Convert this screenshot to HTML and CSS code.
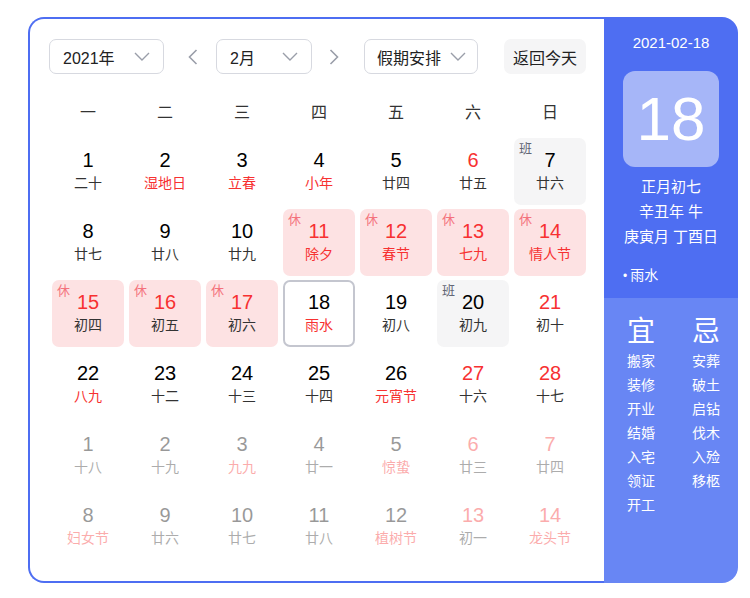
FILE: index.html
```html
<!DOCTYPE html>
<html lang="zh-CN">
<head>
<meta charset="utf-8">
<title>日历</title>
<link rel="stylesheet" href="styles.css">
</head>
<body>
<div class="cal">
  <div class="main">
    <div class="toolbar">
      <div class="select sel-year"><span>2021年</span><svg class="chev" width="16" height="9" viewBox="0 0 16 9"><path d="M1 1l7 7 7-7" fill="none" stroke="#9a9ea9" stroke-width="1.4"/></svg></div>
      <div class="arrow arrow-prev"><svg width="10" height="16" viewBox="0 0 10 16"><path d="M8.5 1L1.5 8l7 7" fill="none" stroke="#9a9ea9" stroke-width="1.6"/></svg></div>
      <div class="select sel-month"><span>2月</span><svg class="chev" width="16" height="9" viewBox="0 0 16 9"><path d="M1 1l7 7 7-7" fill="none" stroke="#9a9ea9" stroke-width="1.4"/></svg></div>
      <div class="arrow arrow-next"><svg width="10" height="16" viewBox="0 0 10 16"><path d="M1.5 1l7 7-7 7" fill="none" stroke="#9a9ea9" stroke-width="1.6"/></svg></div>
      <div class="select sel-holiday"><span>假期安排</span><svg class="chev" width="16" height="9" viewBox="0 0 16 9"><path d="M1 1l7 7 7-7" fill="none" stroke="#9a9ea9" stroke-width="1.4"/></svg></div>
      <div class="today-btn">返回今天</div>
    </div>
    <div class="weekdays">
      <div>一</div><div>二</div><div>三</div><div>四</div><div>五</div><div>六</div><div>日</div>
    </div>
    <div class="grid">
      <div class="cell"><div class="num">1</div><div class="lunar">二十</div></div>
      <div class="cell"><div class="num">2</div><div class="lunar red">湿地日</div></div>
      <div class="cell"><div class="num">3</div><div class="lunar red">立春</div></div>
      <div class="cell"><div class="num">4</div><div class="lunar red">小年</div></div>
      <div class="cell"><div class="num">5</div><div class="lunar">廿四</div></div>
      <div class="cell"><div class="num red">6</div><div class="lunar">廿五</div></div>
      <div class="cell work"><span class="tag">班</span><div class="num">7</div><div class="lunar">廿六</div></div>

      <div class="cell"><div class="num">8</div><div class="lunar">廿七</div></div>
      <div class="cell"><div class="num">9</div><div class="lunar">廿八</div></div>
      <div class="cell"><div class="num">10</div><div class="lunar">廿九</div></div>
      <div class="cell rest"><span class="tag">休</span><div class="num red">11</div><div class="lunar red">除夕</div></div>
      <div class="cell rest"><span class="tag">休</span><div class="num red">12</div><div class="lunar red">春节</div></div>
      <div class="cell rest"><span class="tag">休</span><div class="num red">13</div><div class="lunar red">七九</div></div>
      <div class="cell rest"><span class="tag">休</span><div class="num red">14</div><div class="lunar red">情人节</div></div>

      <div class="cell rest"><span class="tag">休</span><div class="num red">15</div><div class="lunar">初四</div></div>
      <div class="cell rest"><span class="tag">休</span><div class="num red">16</div><div class="lunar">初五</div></div>
      <div class="cell rest"><span class="tag">休</span><div class="num red">17</div><div class="lunar">初六</div></div>
      <div class="cell today"><div class="num">18</div><div class="lunar red">雨水</div></div>
      <div class="cell"><div class="num">19</div><div class="lunar">初八</div></div>
      <div class="cell work"><span class="tag">班</span><div class="num">20</div><div class="lunar">初九</div></div>
      <div class="cell"><div class="num red">21</div><div class="lunar">初十</div></div>

      <div class="cell"><div class="num">22</div><div class="lunar red">八九</div></div>
      <div class="cell"><div class="num">23</div><div class="lunar">十二</div></div>
      <div class="cell"><div class="num">24</div><div class="lunar">十三</div></div>
      <div class="cell"><div class="num">25</div><div class="lunar">十四</div></div>
      <div class="cell"><div class="num">26</div><div class="lunar red">元宵节</div></div>
      <div class="cell"><div class="num red">27</div><div class="lunar">十六</div></div>
      <div class="cell"><div class="num red">28</div><div class="lunar">十七</div></div>

      <div class="cell other"><div class="num">1</div><div class="lunar">十八</div></div>
      <div class="cell other"><div class="num">2</div><div class="lunar">十九</div></div>
      <div class="cell other"><div class="num">3</div><div class="lunar red">九九</div></div>
      <div class="cell other"><div class="num">4</div><div class="lunar">廿一</div></div>
      <div class="cell other"><div class="num">5</div><div class="lunar red">惊蛰</div></div>
      <div class="cell other"><div class="num red">6</div><div class="lunar">廿三</div></div>
      <div class="cell other"><div class="num red">7</div><div class="lunar">廿四</div></div>

      <div class="cell other"><div class="num">8</div><div class="lunar red">妇女节</div></div>
      <div class="cell other"><div class="num">9</div><div class="lunar">廿六</div></div>
      <div class="cell other"><div class="num">10</div><div class="lunar">廿七</div></div>
      <div class="cell other"><div class="num">11</div><div class="lunar">廿八</div></div>
      <div class="cell other"><div class="num">12</div><div class="lunar red">植树节</div></div>
      <div class="cell other"><div class="num red">13</div><div class="lunar">初一</div></div>
      <div class="cell other"><div class="num red">14</div><div class="lunar red">龙头节</div></div>
    </div>
  </div>
  <div class="side">
    <div class="side-top">
      <div class="side-date">2021-02-18</div>
      <div class="big-day">18</div>
      <div class="side-lunar">
        <div>正月初七</div>
        <div>辛丑年 牛</div>
        <div>庚寅月 丁酉日</div>
      </div>
      <div class="term"><span class="dot">•</span>雨水</div>
    </div>
    <div class="side-bottom">
      <div class="col col-left">
        <div class="col-head">宜</div>
        <div>搬家</div><div>装修</div><div>开业</div><div>结婚</div><div>入宅</div><div>领证</div><div>开工</div>
      </div>
      <div class="col">
        <div class="col-head">忌</div>
        <div>安葬</div><div>破土</div><div>启钻</div><div>伐木</div><div>入殓</div><div>移柩</div>
      </div>
    </div>
  </div>
</div>
</body>
</html>
```

FILE: styles.css
```css
* { box-sizing: border-box; }
html, body { margin: 0; padding: 0; background: #fff; }
body {
  font-family: Arial, "Liberation Sans", "Noto Sans CJK SC", sans-serif;
  color: #222;
}
.cal {
  display: flex;
  width: 710px;
  height: 566px;
  margin: 17px 0 0 28px;
}
.main {
  width: 576px;
  flex: none;
  border: 2px solid #4e6ef2;
  border-right: none;
  border-radius: 16px 0 0 16px;
  padding: 20px 0 0 19px;
}
.toolbar {
  display: flex;
  align-items: center;
  height: 35px;
}
.select {
  height: 35px;
  flex: none;
  border: 1px solid #d7d9e0;
  border-radius: 7px;
  display: flex;
  align-items: center;
  justify-content: space-between;
  padding: 0 13px 0 13px;
  font-size: 16px;
  color: #222;
}
.sel-year { width: 115px; }
.sel-month { width: 96px; }
.sel-holiday { width: 114px; padding: 0 11px 0 12px; }
.chev { display: block; flex: none; }
.arrow {
  width: 16px;
  flex: none;
  display: flex;
  justify-content: center;
  align-items: center;
}
.arrow svg { display: block; }
.arrow-prev { margin: 0 15px 0 21px; }
.arrow-next { margin: 0 22px 0 14px; }
.today-btn {
  margin-left: 26px;
  width: 82px;
  flex: none;
  height: 35px;
  border-radius: 7px;
  background: #f5f5f6;
  font-size: 16px;
  color: #222;
  display: flex;
  align-items: center;
  justify-content: center;
}
.weekdays {
  display: grid;
  grid-template-columns: repeat(7, 72px);
  column-gap: 5px;
  margin: 24px 0 0 3px;
  height: 30px;
  line-height: 30px;
  font-size: 16px;
  color: #333;
  text-align: center;
}
.grid {
  display: grid;
  grid-template-columns: repeat(7, 72px);
  grid-auto-rows: 67px;
  column-gap: 5px;
  row-gap: 4px;
  margin: 10px 0 0 3px;
}
.cell {
  position: relative;
  border-radius: 7px;
  display: flex;
  flex-direction: column;
  align-items: center;
  padding-top: 11px;
}
.num {
  font-size: 20px;
  line-height: 22px;
  color: #000;
}
.lunar {
  margin-top: 2px;
  font-size: 14px;
  line-height: 20px;
  color: #333;
}
.red { color: #f73131; }
.num.red { color: #f73131; }
.rest { background: #fde2e3; }
.work { background: #f5f5f6; }
.today { border: 2px solid #c4c6cf; padding-top: 9px; }
.tag {
  position: absolute;
  left: 5px;
  top: 3px;
  font-size: 13px;
  line-height: 16px;
}
.rest .tag { color: #f4727c; }
.work .tag { color: #626675; }
.other { opacity: 0.4; }

.side {
  width: 134px;
  flex: none;
  height: 566px;
  border-radius: 0 16px 16px 0;
  overflow: hidden;
  display: flex;
  flex-direction: column;
  color: #fff;
}
.side-top {
  background: #4e6ef2;
  height: 281px;
  padding-top: 16px;
  display: flex;
  flex-direction: column;
  align-items: center;
}
.side-date {
  font-size: 15px;
  line-height: 20px;
}
.big-day {
  margin-top: 18px;
  width: 96px;
  height: 96px;
  border-radius: 12px;
  background: #a6b6f8;
  font-size: 62px;
  line-height: 96px;
  text-align: center;
  color: #fff;
}
.side-lunar {
  margin-top: 7px;
  font-size: 15px;
  line-height: 25px;
  text-align: center;
}
.term {
  align-self: flex-start;
  margin: 16px 0 0 19px;
  font-size: 14px;
  line-height: 20px;
}
.dot { font-size: 12px; margin-right: 3px; }
.side-bottom {
  flex: 1;
  background: #6886f4;
  display: flex;
  padding: 18px 0 0 23px;
}
.col {
  flex: none;
  font-size: 14px;
  line-height: 24px;
}
.col-left { width: 65px; }
.col-head {
  font-size: 28px;
  line-height: 32px;
  margin-bottom: 1px;
}
```
